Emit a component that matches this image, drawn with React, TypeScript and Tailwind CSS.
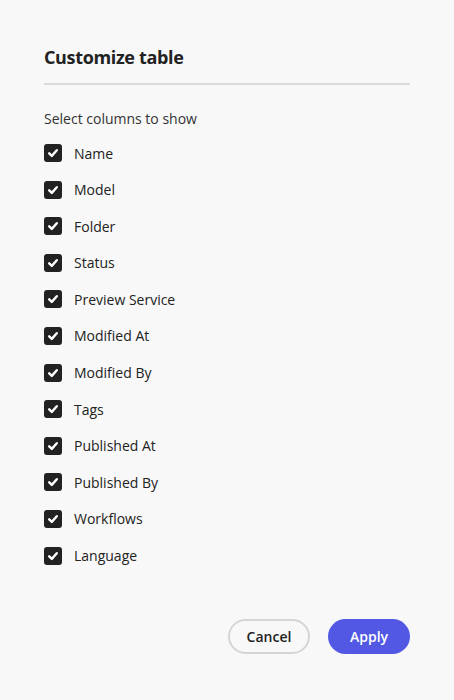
import React from "react";

const cols = [
  "Name",
  "Model",
  "Folder",
  "Status",
  "Preview Service",
  "Modified At",
  "Modified By",
  "Tags",
  "Published At",
  "Published By",
  "Workflows",
  "Language",
];

function Check() {
  return (
    <span className="flex h-[18px] w-[18px] shrink-0 items-center justify-center rounded-[3px] bg-[#222222]">
      <svg width="12" height="12" viewBox="0 0 12 12" fill="none">
        <path d="M2.2 6.3 L4.8 8.9 L9.8 3.2" stroke="#fff" strokeWidth="2.4" strokeLinecap="round" strokeLinejoin="round" />
      </svg>
    </span>
  );
}

export default function App() {
  return (
    <div
      className="h-[700px] w-[454px] bg-[#f8f8f8] text-[#222222]"
      style={{ fontFamily: '"Open Sans", "Noto Sans", sans-serif' }}
    >
      <div className="px-[44px] pt-[44px]">
        <h1 className="text-[18px] font-bold leading-[26px] tracking-[-0.35px]">Customize table</h1>
        <div className="mt-[13px] h-[2px] bg-[#dadada]" />
        <p className="mt-[24px] text-[14px] leading-[20px] text-[#333]">Select columns to show</p>
        <div className="mt-[6px] flex flex-col gap-[0.6px]">
          {cols.map((c) => (
            <label key={c} className="flex h-[36px] items-center gap-[12px]">
              <Check />
              <span className="text-[14px] text-[#222]">{c}</span>
            </label>
          ))}
        </div>
        <div className="mt-[45px] flex justify-end gap-[18px]">
          <button className="h-[35px] w-[82px] rounded-full border-2 border-[#d5d5d5] text-[14px] font-semibold text-[#222]">
            Cancel
          </button>
          <button className="h-[35px] w-[82px] rounded-full bg-[#5258e4] text-[14px] font-semibold text-white">
            Apply
          </button>
        </div>
      </div>
    </div>
  );
}
